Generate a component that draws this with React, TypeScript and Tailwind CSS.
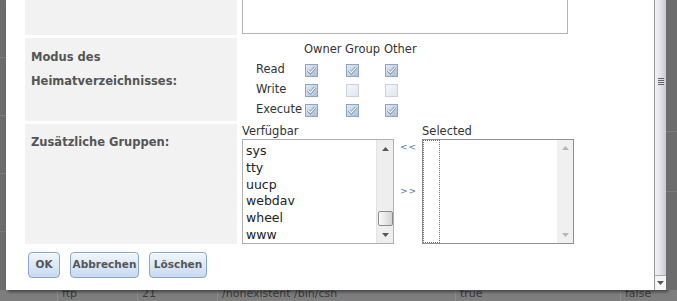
import React from "react";

const avail = ["sys", "tty", "uucp", "webdav", "wheel", "www"];

const perms: { label: string; vals: boolean[] }[] = [
  { label: "Read", vals: [true, true, true] },
  { label: "Write", vals: [true, false, false] },
  { label: "Execute", vals: [true, true, true] },
];

function Check({ on }: { on: boolean }) {
  return (
    <svg width="13" height="13" viewBox="0 0 13 13" className="block">
      <defs>
        <linearGradient id="cbOn" x1="0" y1="0" x2="1" y2="1">
          <stop offset="0" stopColor="#e4ecf6" />
          <stop offset="1" stopColor="#a9bfdb" />
        </linearGradient>
        <linearGradient id="cbOff" x1="0" y1="0" x2="1" y2="1">
          <stop offset="0" stopColor="#f6f8fb" />
          <stop offset="1" stopColor="#dde5ef" />
        </linearGradient>
      </defs>
      <rect x="0.5" y="0.5" width="12" height="12" fill={on ? "url(#cbOn)" : "url(#cbOff)"} stroke={on ? "#8ea5c2" : "#c9d3df"} />
      {on && (
        <>
          <path d="M3 6.3 L5.4 8.8 L10 3.6" fill="none" stroke="#5f7fa6" strokeWidth="2.6" />
          <path d="M3 6.3 L5.4 8.8 L10 3.6" fill="none" stroke="#ffffff" strokeWidth="1.3" />
        </>
      )}
    </svg>
  );
}

function ScrollArrow({ up, light }: { up?: boolean; light?: boolean }) {
  return (
    <svg width="7" height="4" viewBox="0 0 7 4" className="block">
      <path d={up ? "M0 4 L3.5 0 L7 4 Z" : "M0 0 L3.5 4 L7 0 Z"} fill={light ? "#b5b5b5" : "#555"} />
    </svg>
  );
}

function Btn({ children, w }: { children: React.ReactNode; w: string }) {
  return (
    <button
      className={`${w} h-[26px] rounded-[4px] border border-[#8aa6c9] bg-gradient-to-b from-[#f1f6fc] to-[#c7daf1] text-[10.5px] font-bold text-[#555] font-['DejaVu_Sans',sans-serif] shadow-[inset_0_1px_0_#fff]`}
    >
      {children}
    </button>
  );
}

export default function App() {
  return (
    <div className="w-[677px] h-[301px] bg-[#777] flex flex-col overflow-hidden font-['DejaVu_Sans',sans-serif]">
      <div className="flex h-[290px] relative z-10">
        {/* backdrop edge */}
        <div className="w-[6px] bg-[#6c6c6c] flex flex-col">
          <div className="h-[58px] border-b border-[#7c7c7c]" />
          <div className="h-[58px] border-b border-[#7c7c7c]" />
          <div className="h-[58px] border-b border-[#7c7c7c]" />
          <div className="h-[58px] border-b border-[#7c7c7c]" />
        </div>

        {/* dialog */}
        <div className="w-[660px] bg-white flex shadow-[2px_2px_3px_rgba(0,0,0,0.45)]">
          <div className="w-[648px] flex flex-col pl-[19px]">
            {/* row 1 (scrolled off) */}
            <div className="flex h-[35px]">
              <div className="w-[212px] bg-[#f2f2f2]" />
              <div className="ml-[5px]">
                <div className="w-[326px] h-[34px] border-x border-b border-[#b4b4b4]" />
              </div>
            </div>

            {/* row 2 */}
            <div className="flex h-[83px] mt-[3px]">
              <div className="w-[212px] bg-[#f2f2f2] pl-[6px] pt-[7px] text-[11.5px] leading-[24px] font-bold text-[#555]">
                <div>Modus des</div>
                <div>Heimatverzeichnisses:</div>
              </div>
              <div className="ml-[3px] pl-[16px] pt-[2px] text-[11.5px] text-[#333]">
                <div className="flex h-[20px] items-center">
                  <div className="w-[48px]" />
                  <div className="w-[41px]">Owner</div>
                  <div className="w-[39px]">Group</div>
                  <div>Other</div>
                </div>
                {perms.map((p) => (
                  <div key={p.label} className="flex h-[20px] items-center">
                    <div className="w-[49px]">{p.label}</div>
                    {p.vals.map((v, i) => (
                      <div key={i} className={i === 0 ? "w-[41px]" : "w-[39px]"}>
                        <Check on={v} />
                      </div>
                    ))}
                  </div>
                ))}
              </div>
            </div>

            {/* row 3 */}
            <div className="flex h-[120px] mt-[3px]">
              <div className="w-[212px] bg-[#f2f2f2] pl-[6px] pt-[6px] text-[11.5px] leading-[24px] font-bold text-[#555]">
                Zusätzliche Gruppen:
              </div>
              <div className="ml-[5px] flex text-[#333]">
                <div className="flex flex-col w-[152px]">
                  <div className="h-[15px] text-[11.5px] leading-[15px]">Verfügbar</div>
                  <div className="h-[105px] border border-[#b0b0b0] flex">
                    <div className="flex-1 pl-[3px] pt-[3px] text-[12.5px] leading-[16.8px] text-[#222] overflow-hidden">
                      {avail.map((g) => (
                        <div key={g}>{g}</div>
                      ))}
                    </div>
                    <div className="w-[17px] bg-[#eeeeee] border-l border-[#e2e2e2] flex flex-col items-center">
                      <div className="h-[17px] flex items-center justify-center">
                        <ScrollArrow up />
                      </div>
                      <div className="flex-1" />
                      <div className="w-[15px] h-[15px] border border-[#8c8c8c] rounded-[2px] bg-gradient-to-r from-[#fafafa] to-[#d4d4d4]" />
                      <div className="h-[17px] flex items-center justify-center">
                        <ScrollArrow />
                      </div>
                    </div>
                  </div>
                </div>

                <div className="w-[28px] pl-[6px] pt-[16px] text-[9px] text-[#5577a8] tracking-[1px] leading-[14px]">
                  <div>&lt;&lt;</div>
                  <div className="mt-[30px]">&gt;&gt;</div>
                </div>

                <div className="flex flex-col w-[152px]">
                  <div className="h-[15px] text-[11.5px] leading-[15px]">Selected</div>
                  <div className="h-[105px] border border-[#8f8f8f] flex">
                    <div className="flex-1">
                      <div className="w-[17px] h-full border border-dotted border-[#59708f]" />
                    </div>
                    <div className="w-[16px] bg-[#f0f0f0] flex flex-col items-center justify-between py-[6px]">
                      <ScrollArrow up light />
                      <ScrollArrow light />
                    </div>
                  </div>
                </div>
              </div>
            </div>

            {/* buttons */}
            <div className="flex gap-[10px] mt-[8px] pl-[3px]">
              <Btn w="w-[32px]">OK</Btn>
              <Btn w="w-[69px]">Abbrechen</Btn>
              <Btn w="w-[58px]">Löschen</Btn>
            </div>
          </div>

          {/* dialog scrollbar */}
          <div className="w-[12px] border-l border-[#9a9a9a] bg-[#f4f4f4] flex flex-col">
            <div className="h-[276px] bg-gradient-to-r from-[#f3f3f6] via-[#e2e2e8] to-[#c9c9d2] border-b border-[#a8a8b0] flex flex-col items-center pt-[78px]">
              <div className="flex flex-col gap-[1px] w-[6px]">
                <div className="h-px bg-[#666]" />
                <div className="h-px bg-[#666]" />
                <div className="h-px bg-[#666]" />
                <div className="h-px bg-[#666]" />
              </div>
            </div>
            <div className="flex-1 flex items-center justify-center">
              <ScrollArrow />
            </div>
          </div>
        </div>

        <div className="w-[11px] bg-[#6c6c6c] flex flex-col">
          <div className="h-[132px] border-b border-[#7c7c7c]" />
          <div className="h-[60px] border-b border-[#7c7c7c]" />
        </div>
      </div>

      {/* backdrop table row, half hidden behind the dialog */}
      <div className="h-[14px] bg-[#7d7d7d] flex text-[11px] leading-[12px] text-[#3a3a3a] overflow-hidden -mt-[3px] pt-[1px]">
        <div className="w-[58px] shrink-0 border-r border-[#8c8c8c]" />
        <div className="w-[80px] shrink-0 pl-[4px] border-r border-[#8c8c8c]">ftp</div>
        <div className="w-[80px] shrink-0 pl-[4px] border-r border-[#8c8c8c]">21</div>
        <div className="w-[238px] shrink-0 pl-[4px] border-r border-[#8c8c8c]">/nonexistent /bin/csh</div>
        <div className="w-[165px] shrink-0 pl-[4px] border-r border-[#8c8c8c]">true</div>
        <div className="pl-[4px]">false</div>
      </div>
    </div>
  );
}
